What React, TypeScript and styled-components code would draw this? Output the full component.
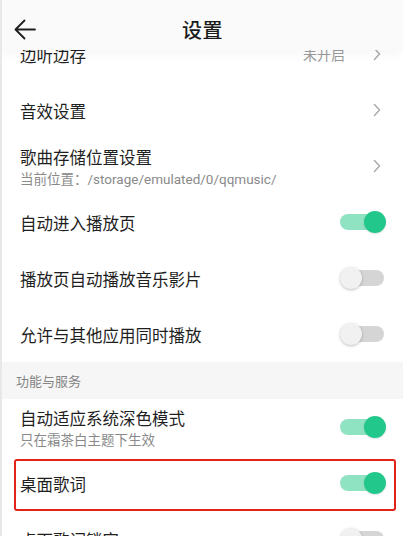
import React from "react";
import styled, { createGlobalStyle } from "styled-components";

const GlobalStyle = createGlobalStyle`
  html, body {
    margin: 0;
    padding: 0;
    background: #ffffff;
  }
  body {
    font-family: "Noto Sans CJK SC", "Noto Sans", Roboto, sans-serif;
    color: #222222;
  }
  * {
    box-sizing: border-box;
  }
`;

type Item = {
  title: string;
  sub?: string;
  value?: string;
  kind: "arrow" | "switch";
  on?: boolean;
  marked?: boolean;
};

type Section = {
  label?: string;
  items: Item[];
};

const sections: Section[] = [
  {
    items: [
      { title: "边听边存", value: "未开启", kind: "arrow" },
      { title: "音效设置", kind: "arrow" },
      {
        title: "歌曲存储位置设置",
        sub: "当前位置：/storage/emulated/0/qqmusic/",
        kind: "arrow",
      },
      { title: "自动进入播放页", kind: "switch", on: true },
      { title: "播放页自动播放音乐影片", kind: "switch", on: false },
      { title: "允许与其他应用同时播放", kind: "switch", on: false },
    ],
  },
  {
    label: "功能与服务",
    items: [
      {
        title: "自动适应系统深色模式",
        sub: "只在霜茶白主题下生效",
        kind: "switch",
        on: true,
      },
      { title: "桌面歌词", kind: "switch", on: true, marked: true },
      { title: "桌面歌词锁定", kind: "switch", on: false },
    ],
  },
];

export default function App() {
  return (
    <>
      <GlobalStyle />
      <Screen>
        <Header>
          <BackButton aria-label="返回">
            <svg width="22" height="21" viewBox="0 0 22 21" fill="none">
              <path
                d="M21 10.5H1.5M10.5 1.5L1.5 10.5L10.5 19.5"
                stroke="#1e1e1e"
                strokeWidth="1.8"
                strokeLinecap="round"
                strokeLinejoin="round"
              />
            </svg>
          </BackButton>
          <Title>设置</Title>
          <span />
        </Header>
        <List>
          {sections.map((section, si) => (
            <React.Fragment key={si}>
              {section.label && <SectionLabel>{section.label}</SectionLabel>}
              {section.items.map((item) => (
                <Row key={item.title} $marked={item.marked}>
                  <Texts>
                    <RowTitle>{item.title}</RowTitle>
                    {item.sub && <RowSub>{item.sub}</RowSub>}
                  </Texts>
                  {item.kind === "arrow" ? (
                    <Trailing>
                      {item.value && <Value>{item.value}</Value>}
                      <Chevron width="8" height="14" viewBox="0 0 8 14" fill="none">
                        <path
                          d="M1.5 1.5L6.5 7L1.5 12.5"
                          stroke="#ababab"
                          strokeWidth="1.5"
                          strokeLinecap="round"
                          strokeLinejoin="round"
                        />
                      </Chevron>
                    </Trailing>
                  ) : (
                    <Switch $on={!!item.on}>
                      <Track $on={!!item.on} />
                      <Knob $on={!!item.on} />
                    </Switch>
                  )}
                </Row>
              ))}
            </React.Fragment>
          ))}
        </List>
      </Screen>
    </>
  );
}

const Screen = styled.div`
  width: 403px;
  height: 536px;
  display: flex;
  flex-direction: column;
  overflow: hidden;
  background: #ffffff;
  border-left: 2px solid #e8e8e8;
`;

const Header = styled.header`
  position: relative;
  z-index: 2;
  height: 50px;
  flex-shrink: 0;
  display: grid;
  grid-template-columns: 56px 1fr 56px;
  align-items: center;
  padding-top: 8px;
  background: #fafafa;
  box-shadow: 0 4px 12px rgba(0, 0, 0, 0.04);
`;

const BackButton = styled.button`
  display: flex;
  align-items: center;
  justify-content: flex-start;
  padding: 0 0 0 12px;
  margin: 0;
  border: none;
  background: none;
  height: 40px;
`;

const Title = styled.h1`
  margin: 0;
  text-align: center;
  font-size: 20px;
  font-weight: 500;
  color: #1a1a1a;
  letter-spacing: 0.5px;
`;

const List = styled.div`
  flex: 1;
  display: flex;
  flex-direction: column;
  margin-top: -24px;
`;

const Row = styled.div<{ $marked?: boolean }>`
  position: relative;
  flex-shrink: 0;
  height: 56px;
  display: flex;
  align-items: center;
  justify-content: space-between;
  padding: 0 17px 0 18px;

  &::after {
    content: "";
    display: ${(p) => (p.$marked ? "block" : "none")};
    position: absolute;
    top: 4px;
    bottom: 0;
    left: 12px;
    right: 7px;
    border: 2.5px solid #e2231a;
    border-radius: 3px;
    pointer-events: none;
  }
`;

const Texts = styled.div`
  display: flex;
  flex-direction: column;
  gap: 2px;
  padding-top: 2px;
`;

const RowTitle = styled.span`
  font-size: 16.5px;
  line-height: 22px;
  color: #1f1f1f;
`;

const RowSub = styled.span`
  font-family: Roboto, "Noto Sans CJK SC", sans-serif;
  font-size: 13.5px;
  line-height: 18px;
  color: #8a8a8a;
`;

const Trailing = styled.div`
  display: flex;
  align-items: center;
  gap: 28px;
  margin-right: 5px;
`;

const Value = styled.span`
  font-size: 14px;
  color: #9a9a9a;
`;

const Chevron = styled.svg`
  display: block;
`;

const SectionLabel = styled.div`
  flex-shrink: 0;
  height: 37px;
  display: flex;
  align-items: center;
  padding-left: 14px;
  background: #f6f6f6;
  font-size: 13px;
  color: #858585;
`;

const Switch = styled.div<{ $on: boolean }>`
  position: relative;
  width: 49px;
  height: 24px;
  flex-shrink: 0;
`;

const Track = styled.div<{ $on: boolean }>`
  position: absolute;
  left: 3px;
  right: 2px;
  top: 4px;
  height: 16px;
  border-radius: 8px;
  background: ${(p) => (p.$on ? "#8fe2c2" : "#d5d5d5")};
`;

const Knob = styled.div<{ $on: boolean }>`
  position: absolute;
  top: 1px;
  left: ${(p) => (p.$on ? "27px" : "3px")};
  width: 22px;
  height: 22px;
  border-radius: 50%;
  background: ${(p) => (p.$on ? "#22c78b" : "#f1f1f1")};
  box-shadow: ${(p) =>
    p.$on ? "0 1px 2px rgba(0, 0, 0, 0.12)" : "0 1px 3px rgba(0, 0, 0, 0.25)"};
`;
